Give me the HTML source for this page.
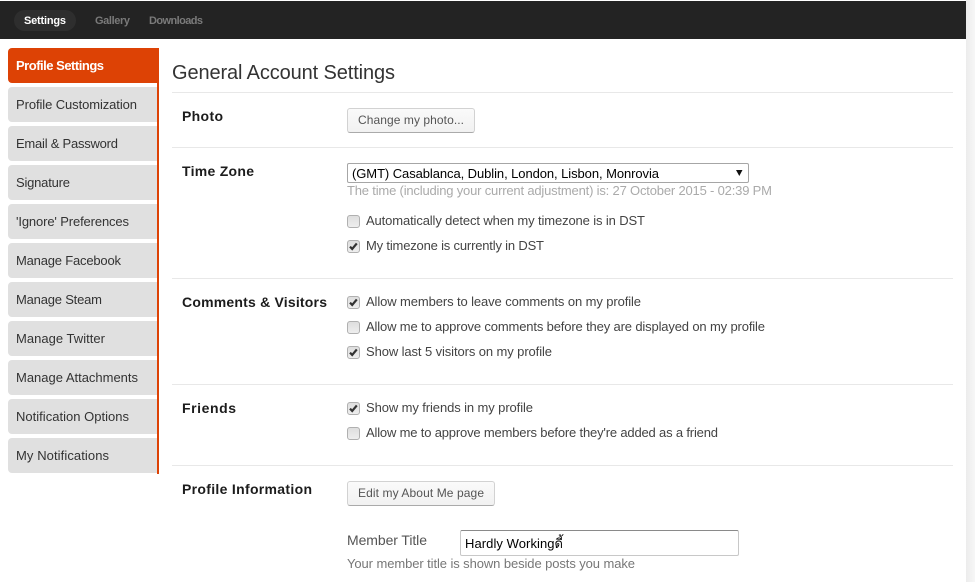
<!DOCTYPE html>
<html lang="en"><head><meta charset="utf-8"><title>General Account Settings</title>
<style>
html,body{margin:0;padding:0;width:975px;height:582px;overflow:hidden;background:#fff}
.a{position:absolute;box-sizing:border-box}
.nav{left:0;top:1px;width:966px;height:38px;background:#232323}
.top{left:0;top:0;width:975px;height:1px;background:#fff}
.strip{left:966px;top:0;width:9px;height:582px;background:linear-gradient(90deg,#ececec,#f7f7f7)}
.pill{left:14px;top:10px;width:62px;height:21px;border-radius:11px;background:#2e2e2e}
.item{left:8px;width:149px;height:35px;background:#e0e0e0;border-radius:4px 0 0 4px}
.on{left:8px;top:48px;height:35px;width:151px;background:#dd4205;border-radius:4px 0 0 4px}
.rail{left:157px;top:48px;width:2px;height:426px;background:#dd4205}
.hr{left:172px;width:781px;height:1px;background:#e8e8e8}
.btn{left:347px;background:linear-gradient(#fafafa,#f1f1f1);border:1px solid #d2d2d2;border-bottom-color:#aaa;border-radius:3px;height:25px}
.cb{left:347px;width:13px;height:13px;background:linear-gradient(#dedede,#eeeeee);border:1px solid #b0b0b0;border-radius:3px}
.cb svg{position:absolute;left:0;top:0}
.sel{left:347px;top:163px;width:402px;height:20px;background:#fff;border:1px solid #a6a6a6;border-radius:2px}
.inp{left:460px;top:530px;width:279px;height:26px;background:#fff;border:1px solid #c8c8c8;border-top-color:#8a8a8a;border-radius:2px}
svg.t{position:absolute;left:0;top:0}
text{font-family:"Liberation Sans","Noto Sans CJK SC",sans-serif;font-size:13px;fill:#444}
.s{fill:#333}.w{font-weight:bold;fill:#fff}
.h{font-weight:bold;font-size:14px;fill:#1c1c1c}
</style></head><body>
<div class="a top"></div><div class="a nav"></div><div class="a strip"></div><div class="a pill"></div>
<div class="a on"></div>
<div class="a item" style="top:87px"></div><div class="a item" style="top:126px"></div><div class="a item" style="top:165px"></div><div class="a item" style="top:204px"></div><div class="a item" style="top:243px"></div><div class="a item" style="top:282px"></div><div class="a item" style="top:321px"></div><div class="a item" style="top:360px"></div><div class="a item" style="top:399px"></div><div class="a item" style="top:438px"></div>
<div class="a rail"></div>
<div class="a hr" style="top:92px"></div><div class="a hr" style="top:147px"></div><div class="a hr" style="top:278px"></div><div class="a hr" style="top:384px"></div><div class="a hr" style="top:465px"></div>
<div class="a btn" style="top:108px;width:128px"></div>
<div class="a btn" style="top:481px;width:148px"></div>
<div class="a sel"></div>
<div class="a inp"></div>
<div class="a cb" style="top:215px"></div>
<div class="a cb" style="top:240px"><svg width="11" height="11"><path d="M2 5.6L4.2 8L8.8 2.4" fill="none" stroke="#333" stroke-width="2.2"/></svg></div>
<div class="a cb" style="top:296px"><svg width="11" height="11"><path d="M2 5.6L4.2 8L8.8 2.4" fill="none" stroke="#333" stroke-width="2.2"/></svg></div>
<div class="a cb" style="top:321px"></div>
<div class="a cb" style="top:346px"><svg width="11" height="11"><path d="M2 5.6L4.2 8L8.8 2.4" fill="none" stroke="#333" stroke-width="2.2"/></svg></div>
<div class="a cb" style="top:402px"><svg width="11" height="11"><path d="M2 5.6L4.2 8L8.8 2.4" fill="none" stroke="#333" stroke-width="2.2"/></svg></div>
<div class="a cb" style="top:427px"></div>
<svg class="t" width="975" height="582" xmlns="http://www.w3.org/2000/svg">
<text x="24" y="24" textLength="42" class="w" style="font-size:11px">Settings</text>
<text x="95" y="24" textLength="35" style="font-size:11px;font-weight:bold;fill:#7a7a7a">Gallery</text>
<text x="149" y="24" textLength="54" style="font-size:11px;font-weight:bold;fill:#7a7a7a">Downloads</text>
<text x="16" y="70" textLength="88" class="w">Profile Settings</text>
<text x="16" y="109" textLength="121" class="s">Profile Customization</text>
<text x="16" y="148" textLength="102" class="s">Email &amp; Password</text>
<text x="16" y="187" textLength="54" class="s">Signature</text>
<text x="16" y="226" textLength="113" class="s">'Ignore' Preferences</text>
<text x="16" y="265" textLength="105" class="s">Manage Facebook</text>
<text x="16" y="304" textLength="86" class="s">Manage Steam</text>
<text x="16" y="343" textLength="89" class="s">Manage Twitter</text>
<text x="16" y="382" textLength="122" class="s">Manage Attachments</text>
<text x="16" y="421" textLength="113" class="s">Notification Options</text>
<text x="16" y="460" textLength="93" class="s">My Notifications</text>
<text x="172" y="79" textLength="223" style="font-size:20px;fill:#333">General Account Settings</text>
<text x="182" y="121" textLength="41" class="h">Photo</text>
<text x="182" y="176" textLength="72" class="h">Time Zone</text>
<text x="182" y="307" textLength="145" class="h">Comments &amp; Visitors</text>
<text x="182" y="413" textLength="54" class="h">Friends</text>
<text x="182" y="494" textLength="130" class="h">Profile Information</text>
<text x="358" y="124" textLength="106" style="font-size:12px;fill:#555">Change my photo...</text>
<text x="358" y="497" textLength="126" style="font-size:12px;fill:#555">Edit my About Me page</text>
<text x="352" y="178" textLength="307" style="fill:#000">(GMT) Casablanca, Dublin, London, Lisbon, Monrovia</text>
<path d="M736 170h6.5l-3.2 6z" fill="#111"/>
<text x="347" y="195" textLength="425" style="fill:#aaa">The time (including your current adjustment) is: 27 October 2015 - 02:39 PM</text>
<text x="366" y="225" textLength="279">Automatically detect when my timezone is in DST</text>
<text x="366" y="250" textLength="178">My timezone is currently in DST</text>
<text x="366" y="306" textLength="275">Allow members to leave comments on my profile</text>
<text x="366" y="331" textLength="399">Allow me to approve comments before they are displayed on my profile</text>
<text x="366" y="356" textLength="186">Show last 5 visitors on my profile</text>
<text x="366" y="412" textLength="167">Show my friends in my profile</text>
<text x="366" y="437" textLength="352">Allow me to approve members before they're added as a friend</text>
<text x="347" y="545" textLength="80" style="font-size:14px;fill:#555">Member Title</text>
<text x="465" y="548" textLength="98" style="fill:#000">Hardly Workingดี้</text>
<text x="347" y="568" textLength="288" style="fill:#777">Your member title is shown beside posts you make</text>
</svg>
</body></html>
